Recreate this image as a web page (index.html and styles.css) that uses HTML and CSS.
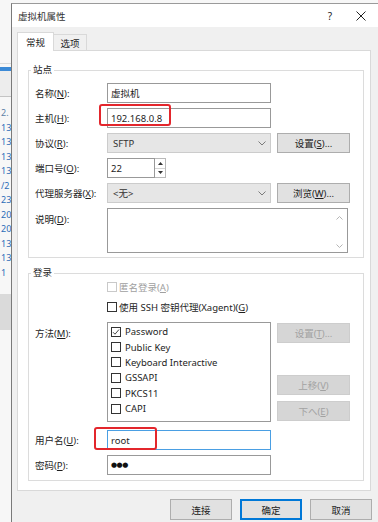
FILE: index.html
```html
<!DOCTYPE html>
<html lang="zh-CN">
<head>
    <meta charset="UTF-8">
    <meta name="viewport" content="width=device-width, initial-scale=1.0">
    <title>虚拟机属性</title>
    <link rel="stylesheet" href="styles.css">
</head>
<body>
    <div class="screen">
        <!-- window behind the dialog, only a sliver visible -->
        <div class="behind">
            <div class="behind-top"></div>
            <div class="behind-rule"></div>
            <div class="behind-bar"></div>
            <div class="behind-gap"></div>
            <div class="behind-rule dark"></div>
            <ul class="behind-list">
                <li class="muted">2.</li>
                <li>13</li>
                <li>13</li>
                <li>13</li>
                <li>13</li>
                <li>/2</li>
                <li>23</li>
                <li>20</li>
                <li>20</li>
                <li>13</li>
                <li>13</li>
                <li>1</li>
            </ul>
            <div class="behind-block"></div>
        </div>

        <div class="dialog">
            <div class="titlebar">
                <span class="title">虚拟机属性</span>
                <span class="tb-help">?</span>
                <svg class="tb-close" width="10" height="10" viewBox="0 0 10 10">
                    <path d="M0.5 0.5 L9.5 9.5 M9.5 0.5 L0.5 9.5" stroke="#222" stroke-width="1" fill="none"/>
                </svg>
            </div>

            <div class="dialog-body">
                <div class="tabs">
                    <div class="tab active">常规</div>
                    <div class="tab">选项</div>
                </div>

                <div class="panel">
                    <fieldset class="group site">
                        <legend>站点</legend>

                        <div class="row">
                            <label>名称(<u>N</u>):</label>
                            <div class="input">虚拟机</div>
                        </div>

                        <div class="row">
                            <label>主机(<u>H</u>):</label>
                            <div class="input marked">
                                192.168.0.8
                                <span class="mark mark-host"></span>
                            </div>
                        </div>

                        <div class="row">
                            <label>协议(<u>R</u>):</label>
                            <div class="select">
                                <span>SFTP</span>
                                <svg width="8" height="5" viewBox="0 0 8 5"><path d="M0.5 0.5 L4 4 L7.5 0.5" stroke="#7a7a7a" fill="none"/></svg>
                            </div>
                            <div class="btn">设置(<u>S</u>)...</div>
                        </div>

                        <div class="row">
                            <label>端口号(<u>O</u>):</label>
                            <div class="input port">22</div>
                            <div class="spinner">
                                <div class="spin-half"><svg width="5" height="3" viewBox="0 0 5 3"><path d="M0 3 L2.5 0 L5 3 Z" fill="#333"/></svg></div>
                                <div class="spin-half"><svg width="5" height="3" viewBox="0 0 5 3"><path d="M0 0 L2.5 3 L5 0 Z" fill="#333"/></svg></div>
                            </div>
                        </div>

                        <div class="row">
                            <label>代理服务器(<u>X</u>):</label>
                            <div class="select">
                                <span>&lt;无&gt;</span>
                                <svg width="8" height="5" viewBox="0 0 8 5"><path d="M0.5 0.5 L4 4 L7.5 0.5" stroke="#7a7a7a" fill="none"/></svg>
                            </div>
                            <div class="btn">浏览(<u>W</u>)...</div>
                        </div>

                        <div class="row tall">
                            <label>说明(<u>D</u>):</label>
                            <div class="textarea">
                                <div class="scroll">
                                    <svg width="7" height="4" viewBox="0 0 7 4"><path d="M0.5 3.5 L3.5 0.5 L6.5 3.5" stroke="#b5b5b5" fill="none"/></svg>
                                    <svg width="7" height="4" viewBox="0 0 7 4"><path d="M0.5 0.5 L3.5 3.5 L6.5 0.5" stroke="#b5b5b5" fill="none"/></svg>
                                </div>
                            </div>
                        </div>
                    </fieldset>

                    <fieldset class="group login">
                        <legend>登录</legend>

                        <div class="check-row disabled">
                            <span class="cb"></span>
                            <span>匿名登录(<u>A</u>)</span>
                        </div>
                        <div class="check-row">
                            <span class="cb"></span>
                            <span>使用 SSH 密钥代理(Xagent)(<u>G</u>)</span>
                        </div>

                        <div class="row method">
                            <label>方法(<u>M</u>):</label>
                            <ul class="listbox">
                                <li>
                                    <span class="cb">
                                        <svg width="8" height="8" viewBox="0 0 8 8"><path d="M1 4.2 L3 6.2 L7 1.5" stroke="#333" stroke-width="0.9" fill="none"/></svg>
                                    </span>
                                    Password
                                </li>
                                <li><span class="cb"></span>Public Key</li>
                                <li><span class="cb"></span>Keyboard Interactive</li>
                                <li><span class="cb"></span>GSSAPI</li>
                                <li><span class="cb"></span>PKCS11</li>
                                <li><span class="cb"></span>CAPI</li>
                            </ul>
                            <div class="side-buttons">
                                <div class="btn off">设置(<u>T</u>)...</div>
                                <div class="btn off move-up">上移(<u>V</u>)</div>
                                <div class="btn off">下へ(<u>E</u>)</div>
                            </div>
                        </div>

                        <div class="row">
                            <label>用户名(<u>U</u>):</label>
                            <div class="input focus marked">
                                root
                                <span class="mark mark-user"></span>
                            </div>
                        </div>

                        <div class="row">
                            <label>密码(<u>P</u>):</label>
                            <div class="input"><span class="dots">●●●</span></div>
                        </div>
                    </fieldset>
                </div>

                <div class="footer">
                    <div class="btn">连接</div>
                    <div class="btn default">确定</div>
                    <div class="btn">取消</div>
                </div>
            </div>
        </div>
    </div>
</body>
</html>
```

FILE: styles.css
```css
* {
  box-sizing: border-box;
}

html, body {
  margin: 0;
  height: 100%;
}

body {
  background: #f7f7f7;
  font-family: "Noto Sans", "Noto Sans CJK SC", sans-serif;
  font-size: 9.5px;
  color: #1e1e1e;
  overflow: hidden;
}

u {
  text-decoration: underline;
}

.screen {
  display: flex;
  height: 522px;
}

/* sliver of the window behind */
.behind {
  width: 11px;
  flex: none;
  display: flex;
  flex-direction: column;
  overflow: hidden;
  background: #f7f7f7;
}

.behind-top {
  height: 63px;
}

.behind-rule {
  height: 1px;
  background: #dcdcdc;
}

.behind-rule.dark {
  background: #c4c4c4;
}

.behind-bar {
  height: 4px;
  margin-top: 3px;
  background: #3c8ad6;
}

.behind-gap {
  height: 25px;
  background: #ededed;
}

.behind-list {
  list-style: none;
  margin: 9px 0 0;
  padding: 0 0 0 1px;
  font-size: 9px;
  line-height: 14.5px;
  color: #2d6cb8;
  white-space: nowrap;
}

.behind-list .muted {
  color: #5d7fa6;
}

.behind-block {
  height: 36px;
  margin-top: 14px;
  background: #dadada;
}

/* dialog */
.dialog {
  flex: 1;
  margin-top: 3px;
  border-left: 1px solid #7a7a7a;
  border-top: 1px solid #9a9a9a;
  background: #f0f0f0;
  display: flex;
  flex-direction: column;
}

.titlebar {
  height: 23px;
  flex: none;
  background: #ffffff;
  display: flex;
  align-items: center;
  padding-left: 6px;
}

.title {
  color: #333;
}

.tb-help {
  margin-left: auto;
  font-size: 10px;
  color: #222;
}

.tb-close {
  margin-left: 24px;
  margin-right: 12px;
}

.dialog-body {
  padding: 5px 6px 0 5px;
}

.tabs {
  display: flex;
  height: 18px;
}

.tab {
  display: flex;
  align-items: center;
  justify-content: center;
  border: 1px solid #d9d9d9;
  border-bottom: none;
}

.tab.active {
  width: 37px;
  height: 19px;
  background: #ffffff;
  position: relative;
  z-index: 1;
}

.tab:not(.active) {
  width: 33px;
  height: 16px;
  margin-top: 2px;
  border-left: none;
}

.panel {
  height: 441px;
  margin-right: 1px;
  background: #ffffff;
  border: 1px solid #d9d9d9;
  padding: 0 6px 0 10px;
}

/* group boxes */
.group {
  margin: 0;
  border: 1px solid #dcdcdc;
  padding: 7px 12px 4px 6px;
  min-width: 0;
}

.group legend {
  padding: 0 2px;
  margin-left: -4px;
  line-height: 12px;
}

.site {
  margin-top: 13px;
}

.login {
  margin-top: 9px;
  padding-top: 1px;
  padding-bottom: 5px;
}

.row {
  display: flex;
  align-items: center;
  height: 20px;
  margin-bottom: 5px;
}

.row:last-child {
  margin-bottom: 0;
}

.row label {
  width: 72px;
  flex: none;
}

.row.tall {
  align-items: flex-start;
  height: 45px;
}

.row.tall label {
  padding-top: 4px;
}

.input {
  position: relative;
  width: 164px;
  height: 20px;
  border: 1px solid #999999;
  background: #ffffff;
  padding: 0 3px;
  display: flex;
  align-items: center;
}

.input.port {
  width: 48px;
}

.input.focus {
  border-color: #4a9fe3;
}

.dots {
  font-family: "DejaVu Sans", sans-serif;
  font-size: 7px;
  letter-spacing: -0.5px;
  color: #111;
}

.spinner {
  width: 11px;
  height: 20px;
  border: 1px solid #b9b9b9;
  border-left: none;
  background: #ffffff;
  display: flex;
  flex-direction: column;
}

.spin-half {
  flex: 1;
  display: flex;
  align-items: center;
  justify-content: center;
}

.spin-half:first-child {
  border-bottom: 1px solid #d4d4d4;
}

.select {
  width: 164px;
  height: 20px;
  background: #e6e6e6;
  border: 1px solid #cccccc;
  padding: 0 4px 0 5px;
  display: flex;
  align-items: center;
  justify-content: space-between;
  color: #333;
}

.btn {
  width: 73px;
  height: 20px;
  margin-left: 6px;
  background: #e1e1e1;
  border: 1px solid #adadad;
  display: flex;
  align-items: center;
  justify-content: center;
  color: #222;
}

.btn.off {
  margin-left: 0;
  background: #d6d6d6;
  border-color: #cdcdcd;
  color: #a2a2a2;
}

.textarea {
  width: 241px;
  height: 45px;
  border: 1px solid #999999;
  background: #ffffff;
  display: flex;
  justify-content: flex-end;
}

.scroll {
  width: 15px;
  padding: 7px 0 4px;
  display: flex;
  flex-direction: column;
  justify-content: space-between;
  align-items: center;
}

/* checkboxes */
.cb {
  width: 10px;
  height: 10px;
  flex: none;
  border: 1px solid #333333;
  background: #ffffff;
  display: inline-flex;
  align-items: center;
  justify-content: center;
}

.check-row {
  display: flex;
  align-items: center;
  gap: 2px;
  height: 14px;
  margin-left: 72px;
  margin-bottom: 6px;
}

.check-row.disabled {
  color: #a0a0a0;
}

.check-row.disabled .cb {
  border-color: #c9c9c9;
}

.row.method {
  align-items: flex-start;
  height: 100px;
  margin-top: 8px;
  margin-bottom: 8px;
}

.row.method label {
  padding-top: 4px;
}

.listbox {
  list-style: none;
  margin: 0;
  width: 164px;
  height: 100px;
  border: 1px solid #999999;
  padding: 1px 0 0 3px;
}

.listbox li {
  height: 15.4px;
  display: flex;
  align-items: center;
  gap: 4px;
}

.side-buttons {
  margin-left: 6px;
  padding-top: 1px;
  display: flex;
  flex-direction: column;
  gap: 6px;
}

.side-buttons .move-up {
  margin-top: 26px;
}

/* red annotation boxes drawn over the fields */
.mark {
  position: absolute;
  border: 2px solid #e3262c;
  border-radius: 3px;
}

.mark-host {
  left: -9px;
  top: -5px;
  width: 72px;
  height: 22px;
}

.mark-user {
  left: -14px;
  top: -4px;
  width: 63px;
  height: 23px;
}

.footer {
  display: flex;
  justify-content: flex-end;
  gap: 8px;
  margin-top: 8px;
}

.footer .btn {
  width: 62px;
  height: 21px;
  margin-left: 0;
}

.footer .btn.default {
  border-color: #0078d7;
  box-shadow: inset 0 0 0 1px #0078d7;
}
```
